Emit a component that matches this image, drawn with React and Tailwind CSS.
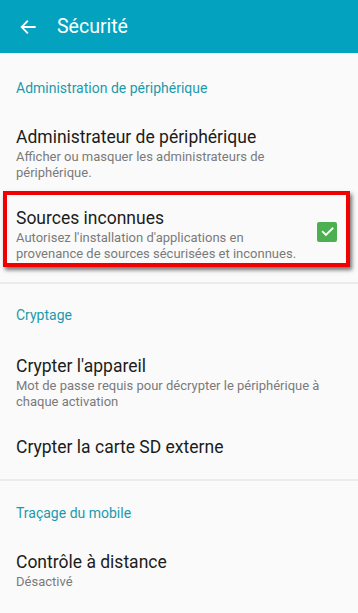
import React from 'react'

const font = { fontFamily: 'Roboto, "Noto Sans", sans-serif' }

const SectionTitle = ({ children, className = '' }) => (
  <div className={`px-4 h-[20px] leading-[20px] text-[14px] text-[#1a9bad] ${className}`}>{children}</div>
)

const Item = ({ title, sub, className = '' }) => (
  <div className={`px-4 ${className}`}>
    <div className="h-[22px] leading-[22px] text-[17.5px] text-[#1c1c1c]">{title}</div>
    {sub && <div className="mt-px text-[13px] leading-[16px] text-[#7a7a7a]">{sub}</div>}
  </div>
)

const App = () => {
  return (
    <div className="w-[358px] h-[613px] bg-[#fafafa] overflow-hidden" style={font}>
      <div className="h-[53px] bg-[#03a3c0] flex items-center">
        <svg className="ml-[19px] w-[18px] h-[18px]" viewBox="0 0 24 24" fill="none" stroke="white" strokeWidth="2.4" strokeLinecap="square">
          <path d="M21 12H4M11 4.5L3.5 12l7.5 7.5" />
        </svg>
        <span className="ml-[20px] text-[19.5px] text-white">Sécurité</span>
      </div>

      <SectionTitle className="mt-[25px]">Administration de périphérique</SectionTitle>
      <Item
        className="mt-[28px]"
        title="Administrateur de périphérique"
        sub={<>Afficher ou masquer les administrateurs de<br />périphérique.</>}
      />

      <div className="mt-[10px] ml-[3px] mr-[8px] h-[76px] border-4 border-[#f00000] shadow-[2px_3px_4px_rgba(0,0,0,0.55)] flex items-center pl-[9px] pr-[9px]">
        <div className="flex-1 pt-[10px]">
          <div className="h-[22px] leading-[22px] text-[17.5px] text-[#1c1c1c]">Sources inconnues</div>
          <div className="mt-px text-[13px] leading-[16px] text-[#7a7a7a]">
            Autorisez l'installation d'applications en<br />provenance de sources sécurisées et inconnues.
          </div>
        </div>
        <div className="w-[20px] h-[20px] rounded-[2px] bg-[#4caf50] flex items-center justify-center mt-[5px]">
          <svg className="w-[15px] h-[15px]" viewBox="0 0 24 24" fill="none" stroke="white" strokeWidth="3" strokeLinecap="square">
            <path d="M4.5 12.5l5 5L20 7" />
          </svg>
        </div>
      </div>

      <div className="mt-[15px] h-[2px] bg-[#ebebeb]" />

      <SectionTitle className="mt-[21px]">Cryptage</SectionTitle>
      <Item
        className="mt-[30px]"
        title="Crypter l'appareil"
        sub={<>Mot de passe requis pour décrypter le périphérique à<br />chaque activation</>}
      />
      <Item className="mt-[26px]" title="Crypter la carte SD externe" />

      <div className="mt-[21px] h-[2px] bg-[#ebebeb]" />

      <SectionTitle className="mt-[22px]">Traçage du mobile</SectionTitle>
      <Item className="mt-[28px]" title="Contrôle à distance" sub="Désactivé" />
    </div>
  )
}

export default App
